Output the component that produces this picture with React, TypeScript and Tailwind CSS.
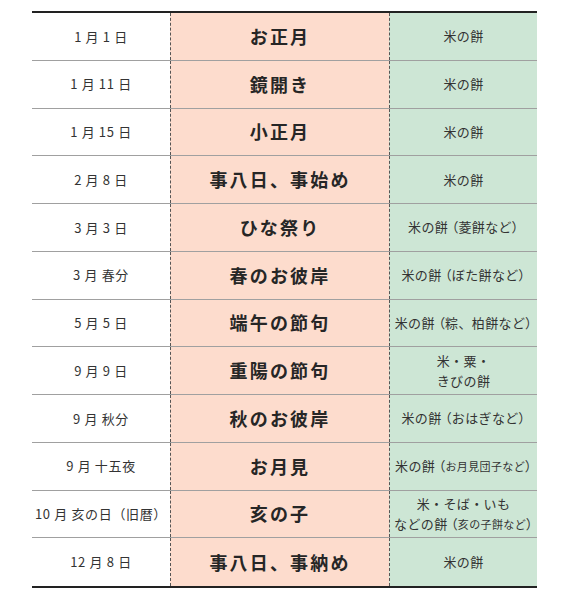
import React from 'react';

type Row = {
  date: string;
  event: string;
  food: React.ReactNode;
};

// 括弧だけ詰める
const P = ({ c }: { c: string }) => <span className="[font-feature-settings:'palt']">{c}</span>;

const paren = (main: string, inner: React.ReactNode) => (
  <>
    {main}
    <P c="（" />
    {inner}
    <P c="）" />
  </>
);

const small = (t: string) => <span className="text-[11px]">{t}</span>;

const rows: Row[] = [
  { date: '1 月 1 日', event: 'お正月', food: '米の餅' },
  { date: '1 月 11 日', event: '鏡開き', food: '米の餅' },
  { date: '1 月 15 日', event: '小正月', food: '米の餅' },
  { date: '2 月 8 日', event: '事八日、事始め', food: '米の餅' },
  { date: '3 月 3 日', event: 'ひな祭り', food: paren('米の餅 ', '菱餅など') },
  { date: '3 月 春分', event: '春のお彼岸', food: paren('米の餅 ', 'ぼた餅など') },
  { date: '5 月 5 日', event: '端午の節句', food: paren('米の餅 ', '粽、柏餅など') },
  {
    date: '9 月 9 日',
    event: '重陽の節句',
    food: (
      <>
        米・粟・
        <br />
        きびの餅
      </>
    ),
  },
  { date: '9 月 秋分', event: '秋のお彼岸', food: paren('米の餅 ', 'おはぎなど') },
  {
    date: '9 月 十五夜',
    event: 'お月見',
    food: paren('米の餅 ', small('お月見団子など')),
  },
  {
    date: '10 月 亥の日（旧暦）',
    event: '亥の子',
    food: (
      <>
        米・そば・いも
        <br />
        {paren('などの餅 ', small('亥の子餅など'))}
      </>
    ),
  },
  { date: '12 月 8 日', event: '事八日、事納め', food: '米の餅' },
];

export default function App() {
  return (
    <div
      className="w-[565px] h-[596px] bg-white pt-[11px] pl-[32px]"
      style={{ fontFamily: '"Noto Sans CJK JP", "Noto Sans", sans-serif' }}
    >
      <div className="w-[505px] border-t-2 border-b-2 border-[#222]">
        {rows.map((r, i) => (
          <div
            key={i}
            className={`grid grid-cols-[138px_219px_148px] h-[47.75px] ${
              i < rows.length - 1 ? 'border-b-[1.5px] border-[#a0a0a0]' : ''
            }`}
          >
            <div className="flex items-center justify-center text-[13px] text-[#333] whitespace-nowrap tracking-[0.05em]">
              {r.date}
            </div>
            <div className="flex items-center justify-center bg-[#fddccd] border-l border-dashed border-[#555] text-[18px] font-bold text-[#262626] tracking-[0.12em] whitespace-nowrap">
              {r.event}
            </div>
            <div className="flex items-center justify-center bg-[#cde6d5] border-l border-dashed border-[#555] text-[13px] leading-[20px] text-[#333] text-center whitespace-nowrap tracking-[0.03em]">
              <div>{r.food}</div>
            </div>
          </div>
        ))}
      </div>
    </div>
  );
}
